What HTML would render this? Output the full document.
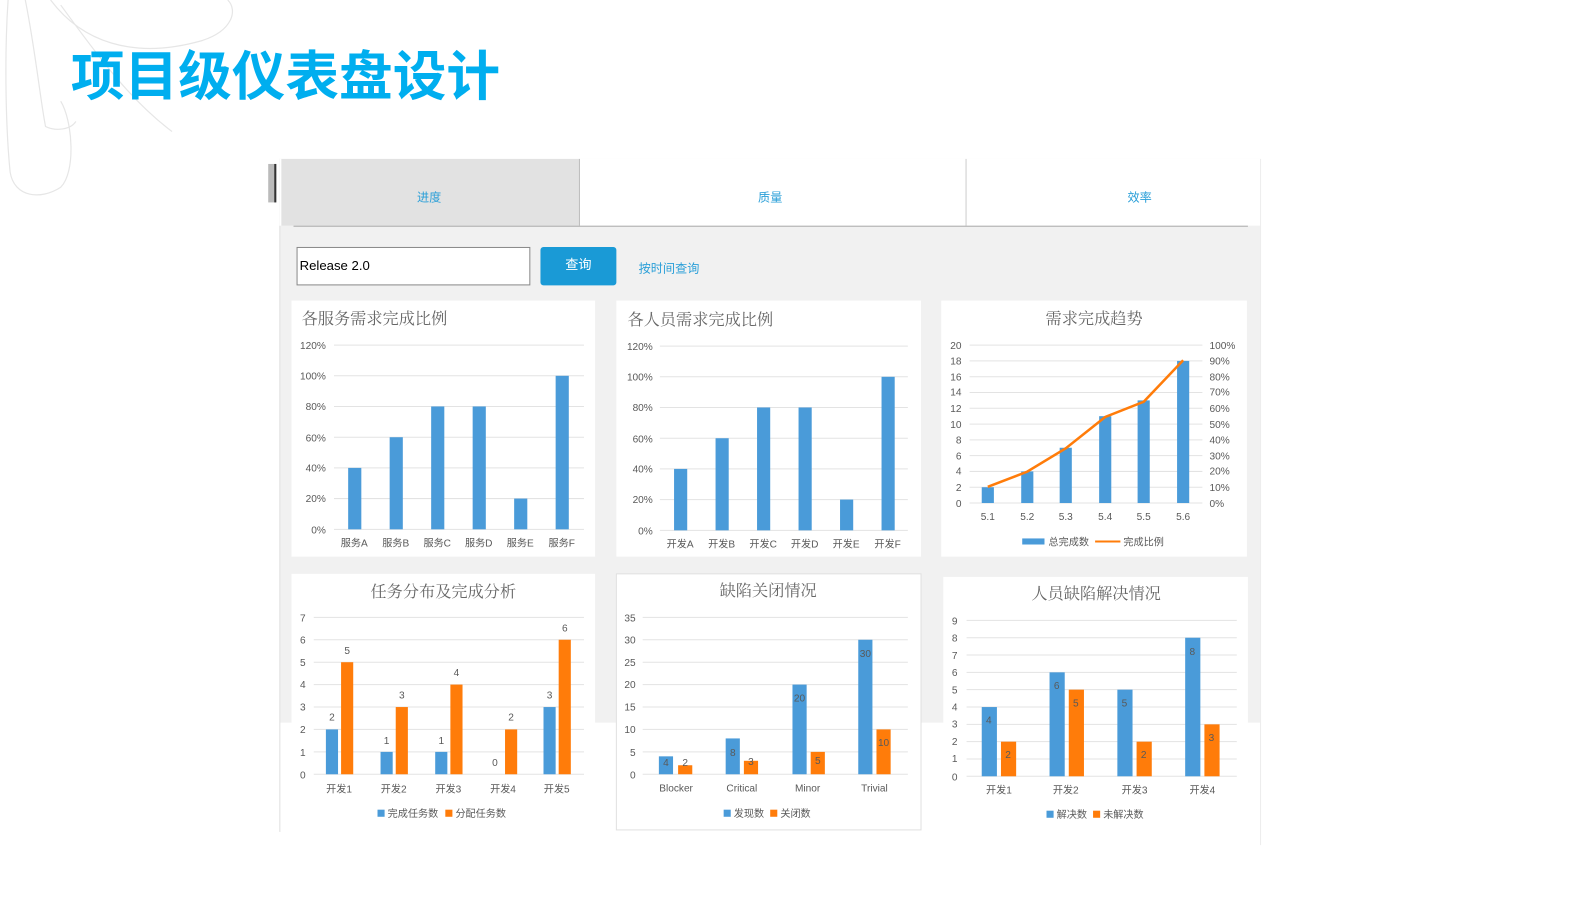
<!DOCTYPE html>
<html><head><meta charset="utf-8"><style>
body{margin:0;width:1587px;height:892px;background:#fff;position:relative;overflow:hidden;font-family:"Liberation Sans","Noto Sans CJK SC",sans-serif}
#wrap{position:absolute;left:0;top:0;width:1587px;height:892px;transform:scale(1.0121);transform-origin:0 0}
.abs{position:absolute}
</style></head><body><div id="wrap">
<svg class="abs" style="left:0;top:0" width="1587" height="892">
<g fill="none" stroke="#e6e6e6" stroke-width="1.2">
<path d="M8,0 C4,60 6,130 10,170 C14,195 40,198 60,185 C75,170 72,120 60,100"/>
<path d="M25,0 C35,50 40,100 45,125 C55,130 70,128 75,120"/>
<path d="M50,0 C80,40 130,60 200,40 C230,30 235,10 225,0"/>
<path d="M60,5 C100,60 130,100 170,130"/>
</g>
</svg>
<div class="abs" style="left:70px;top:40px;font-size:53px;font-weight:bold;color:#00aeef;font-family:'Noto Sans CJK SC',sans-serif;line-height:64px">项目级仪表盘设计</div>

<div class="abs" style="left:276px;top:157px;width:969px;height:557px;background:#f1f1f1"></div>
<div class="abs" style="left:276px;top:157px;width:1px;height:665px;background:#e0e0e0"></div>
<div class="abs" style="left:1245px;top:157px;width:1px;height:678px;background:#ececec"></div>
<div class="abs" style="left:276px;top:157px;width:969px;height:66px;background:#fff"></div>
<div class="abs" style="left:278px;top:157px;width:294px;height:66px;background:#e2e2e2"></div>
<div class="abs" style="left:572px;top:157px;width:1px;height:66px;background:#bbb"></div>
<div class="abs" style="left:954px;top:157px;width:1px;height:66px;background:#ccc"></div>
<div class="abs" style="left:290px;top:223px;width:943px;height:1px;background:#aaa"></div>
<div class="abs" style="left:265px;top:162px;width:6px;height:38px;background:#bbb;border-right:2px solid #333"></div>
<div class="abs" style="left:374px;top:186px;width:100px;text-align:center;font-size:12px;color:#2a9fd8">进度</div>
<div class="abs" style="left:711px;top:186px;width:100px;text-align:center;font-size:12px;color:#2a9fd8">质量</div>
<div class="abs" style="left:1076px;top:186px;width:100px;text-align:center;font-size:12px;color:#2a9fd8">效率</div>
<div class="abs" style="left:293px;top:244px;height:36px;background:#fff;border:1px solid #888;font-size:13px;line-height:36px;padding-left:2px;width:227px">Release 2.0</div>
<div class="abs" style="left:534px;top:244px;width:75px;height:38px;background:#1a9ad6;border-radius:3px;color:#fff;font-size:13px;text-align:center;line-height:36px">查询</div>
<div class="abs" style="left:631px;top:256px;font-size:12px;color:#2a9fd8">按时间查询</div>

<svg class="abs" style="left:0;top:0" width="1587" height="892" font-family="Liberation Sans,Noto Sans CJK SC,sans-serif" font-size="10" fill="#595959">
<rect x="288" y="297" width="300" height="253" fill="#fff"/>
<rect x="609" y="297" width="301" height="253" fill="#fff"/>
<rect x="930" y="297" width="302" height="253" fill="#fff"/>
<rect x="288" y="567" width="300" height="253" fill="#fff"/>
<rect x="609" y="567" width="301" height="253" fill="#fff" stroke="#e0e0e0"/>
<rect x="932" y="570" width="301" height="250" fill="#fff"/>
<g font-family="Noto Serif CJK SC,serif" font-size="16" fill="#666">
<text x="298" y="320">各服务需求完成比例</text>
<text x="620" y="321">各人员需求完成比例</text>
<text x="1081" y="320" text-anchor="middle">需求完成趋势</text>
<text x="438" y="590" text-anchor="middle">任务分布及完成分析</text>
<text x="759" y="589" text-anchor="middle">缺陷关闭情况</text>
<text x="1083" y="592" text-anchor="middle">人员缺陷解决情况</text>
</g>
<g stroke="#e3e3e3">
<path d="M330 341H577M330 371.3H577M330 401.6H577M330 432H577M330 462.3H577M330 492.6H577M330 523H577"/>
<path d="M652 342H897M652 372.3H897M652 402.6H897M652 433H897M652 463.3H897M652 493.6H897M652 524H897"/>
<path d="M958 341H1188M958 356.6H1188M958 372.2H1188M958 387.8H1188M958 403.4H1188M958 419H1188M958 434.6H1188M958 450.2H1188M958 465.8H1188M958 481.4H1188M958 497H1188"/>
<path d="M310 610H577M310 632.1H577M310 654.3H577M310 676.4H577M310 698.6H577M310 720.7H577M310 742.9H577M310 765H577"/>
<path d="M635 610H897M635 632.1H897M635 654.3H897M635 676.4H897M635 698.6H897M635 720.7H897M635 742.9H897M635 765H897"/>
<path d="M955 613H1222M955 630.1H1222M955 647.2H1222M955 664.3H1222M955 681.4H1222M955 698.6H1222M955 715.7H1222M955 732.8H1222M955 749.9H1222M955 767H1222"/>
</g>
<g text-anchor="end">
<text x="322" y="345">120%</text><text x="322" y="375">100%</text><text x="322" y="405">80%</text><text x="322" y="436">60%</text><text x="322" y="466">40%</text><text x="322" y="496">20%</text><text x="322" y="527">0%</text>
<text x="645" y="346">120%</text><text x="645" y="376">100%</text><text x="645" y="406">80%</text><text x="645" y="437">60%</text><text x="645" y="467">40%</text><text x="645" y="497">20%</text><text x="645" y="528">0%</text>
<text x="950" y="345">20</text><text x="950" y="360">18</text><text x="950" y="376">16</text><text x="950" y="391">14</text><text x="950" y="407">12</text><text x="950" y="423">10</text><text x="950" y="438">8</text><text x="950" y="454">6</text><text x="950" y="469">4</text><text x="950" y="485">2</text><text x="950" y="501">0</text>
<text x="302" y="614">7</text><text x="302" y="636">6</text><text x="302" y="658">5</text><text x="302" y="680">4</text><text x="302" y="702">3</text><text x="302" y="724">2</text><text x="302" y="747">1</text><text x="302" y="769">0</text>
<text x="628" y="614">35</text><text x="628" y="636">30</text><text x="628" y="658">25</text><text x="628" y="680">20</text><text x="628" y="702">15</text><text x="628" y="724">10</text><text x="628" y="747">5</text><text x="628" y="769">0</text>
<text x="946" y="617">9</text><text x="946" y="634">8</text><text x="946" y="651">7</text><text x="946" y="668">6</text><text x="946" y="685">5</text><text x="946" y="702">4</text><text x="946" y="719">3</text><text x="946" y="736">2</text><text x="946" y="753">1</text><text x="946" y="771">0</text>
</g>
<g>
<text x="1195" y="345">100%</text><text x="1195" y="360">90%</text><text x="1195" y="376">80%</text><text x="1195" y="391">70%</text><text x="1195" y="407">60%</text><text x="1195" y="423">50%</text><text x="1195" y="438">40%</text><text x="1195" y="454">30%</text><text x="1195" y="469">20%</text><text x="1195" y="485">10%</text><text x="1195" y="501">0%</text>
</g>
<g fill="#4a9bd9">
<rect x="344" y="462.3" width="13" height="60.7"/><rect x="385" y="432" width="13" height="91"/><rect x="426" y="401.6" width="13" height="121.4"/><rect x="467" y="401.6" width="13" height="121.4"/><rect x="508" y="492.6" width="13" height="30.4"/><rect x="549" y="371.3" width="13" height="151.7"/>
<rect x="666" y="463.3" width="13" height="60.7"/><rect x="707" y="433" width="13" height="91"/><rect x="748" y="402.6" width="13" height="121.4"/><rect x="789" y="402.6" width="13" height="121.4"/><rect x="830" y="493.6" width="13" height="30.4"/><rect x="871" y="372.3" width="13" height="151.7"/>
<rect x="970" y="481.4" width="12" height="15.6"/><rect x="1009" y="465.8" width="12" height="31.2"/><rect x="1047" y="442.4" width="12" height="54.6"/><rect x="1086" y="411.2" width="12" height="85.8"/><rect x="1124" y="395.6" width="12" height="101.4"/><rect x="1163" y="356.6" width="12" height="140.4"/>
<rect x="322" y="720.7" width="12" height="44.3"/><rect x="376" y="742.9" width="12" height="22.1"/><rect x="430" y="742.9" width="12" height="22.1"/><rect x="537" y="698.6" width="12" height="66.4"/>
<rect x="651" y="747.3" width="14" height="17.7"/><rect x="717" y="729.6" width="14" height="35.4"/><rect x="783" y="676.4" width="14" height="88.6"/><rect x="848" y="632.1" width="14" height="132.9"/>
<rect x="970" y="698.6" width="15" height="68.4"/><rect x="1037" y="664.3" width="15" height="102.7"/><rect x="1104" y="681.4" width="15" height="85.6"/><rect x="1171" y="630.1" width="15" height="136.9"/>
</g>
<g fill="#ff7c0a">
<rect x="337" y="654.3" width="12" height="110.7"/><rect x="391" y="698.6" width="12" height="66.4"/><rect x="445" y="676.4" width="12" height="88.6"/><rect x="499" y="720.7" width="12" height="44.3"/><rect x="552" y="632.1" width="12" height="132.9"/>
<rect x="670" y="756.1" width="14" height="8.9"/><rect x="735" y="751.7" width="14" height="13.3"/><rect x="801" y="742.9" width="14" height="22.1"/><rect x="866" y="720.7" width="14" height="44.3"/>
<rect x="989" y="732.8" width="15" height="34.2"/><rect x="1056" y="681.4" width="15" height="85.6"/><rect x="1123" y="732.8" width="15" height="34.2"/><rect x="1190" y="715.7" width="15" height="51.3"/>
</g>
<polyline points="976,481 1015,466 1053,443 1092,412 1130,397 1169,356" fill="none" stroke="#ff7c0a" stroke-width="2.5"/>
<g text-anchor="middle">
<text x="350" y="540">服务A</text><text x="391" y="540">服务B</text><text x="432" y="540">服务C</text><text x="473" y="540">服务D</text><text x="514" y="540">服务E</text><text x="555" y="540">服务F</text>
<text x="672" y="541">开发A</text><text x="713" y="541">开发B</text><text x="754" y="541">开发C</text><text x="795" y="541">开发D</text><text x="836" y="541">开发E</text><text x="877" y="541">开发F</text>
<text x="976" y="514">5.1</text><text x="1015" y="514">5.2</text><text x="1053" y="514">5.3</text><text x="1092" y="514">5.4</text><text x="1130" y="514">5.5</text><text x="1169" y="514">5.6</text>
<text x="335" y="783">开发1</text><text x="389" y="783">开发2</text><text x="443" y="783">开发3</text><text x="497" y="783">开发4</text><text x="550" y="783">开发5</text>
<text x="668" y="782">Blocker</text><text x="733" y="782">Critical</text><text x="798" y="782">Minor</text><text x="864" y="782">Trivial</text>
<text x="987" y="784">开发1</text><text x="1053" y="784">开发2</text><text x="1121" y="784">开发3</text><text x="1188" y="784">开发4</text>
<text x="328" y="712">2</text><text x="343" y="646">5</text><text x="382" y="735">1</text><text x="397" y="690">3</text><text x="436" y="735">1</text><text x="451" y="668">4</text><text x="489" y="757">0</text><text x="505" y="712">2</text><text x="543" y="690">3</text><text x="558" y="624">6</text>
<text x="658" y="757">4</text><text x="677" y="757">2</text><text x="724" y="747">8</text><text x="742" y="756">3</text><text x="790" y="693">20</text><text x="808" y="755">5</text><text x="855" y="649">30</text><text x="873" y="737">10</text>
<text x="977" y="715">4</text><text x="996" y="749">2</text><text x="1044" y="681">6</text><text x="1063" y="698">5</text><text x="1111" y="698">5</text><text x="1130" y="749">2</text><text x="1178" y="647">8</text><text x="1197" y="732">3</text>
</g>
<rect x="1010" y="532" width="22" height="6" fill="#4a9bd9"/><text x="1036" y="539">总完成数</text>
<line x1="1082" y1="535" x2="1107" y2="535" stroke="#ff7c0a" stroke-width="2"/><text x="1110" y="539">完成比例</text>
<rect x="373" y="800" width="7" height="7" fill="#4a9bd9"/><text x="383" y="807">完成任务数</text>
<rect x="440" y="800" width="7" height="7" fill="#ff7c0a"/><text x="450" y="807">分配任务数</text>
<rect x="715" y="800" width="7" height="7" fill="#4a9bd9"/><text x="725" y="807">发现数</text>
<rect x="761" y="800" width="7" height="7" fill="#ff7c0a"/><text x="771" y="807">关闭数</text>
<rect x="1034" y="801" width="7" height="7" fill="#4a9bd9"/><text x="1044" y="808">解决数</text>
<rect x="1080" y="801" width="7" height="7" fill="#ff7c0a"/><text x="1090" y="808">未解决数</text>
</svg>
</div></body></html>
